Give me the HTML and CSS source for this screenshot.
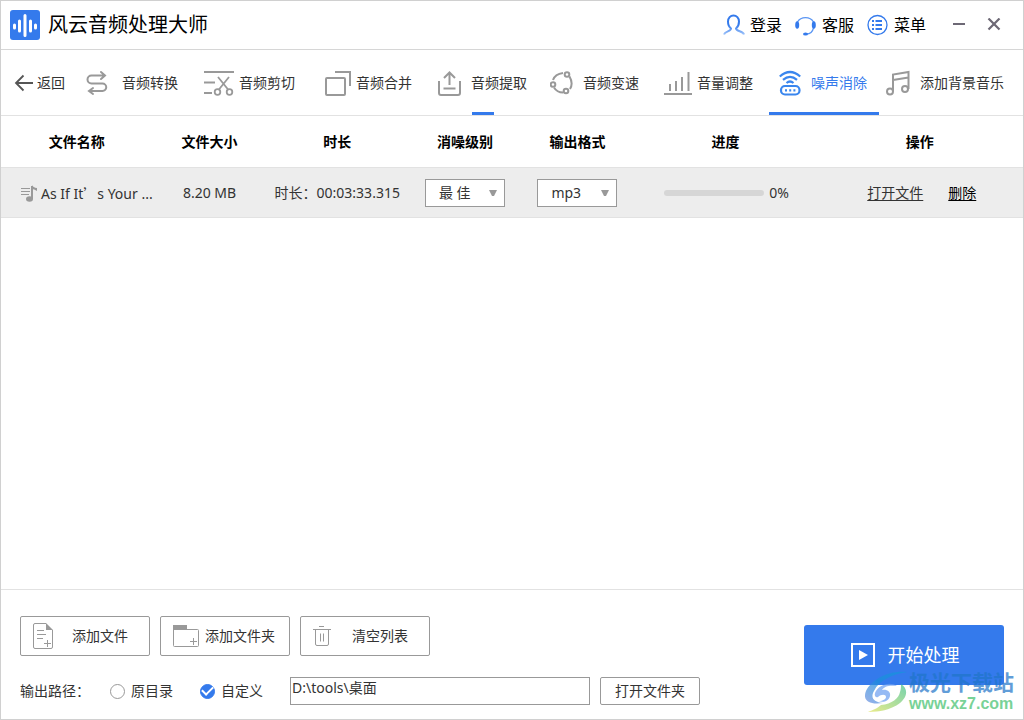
FILE: index.html
```html
<!DOCTYPE html>
<html lang="zh-CN">
<head>
<meta charset="utf-8">
<title>风云音频处理大师</title>
<link rel="stylesheet" href="styles.css">
</head>
<body>
<div class="window">
  <header class="titlebar">
    <svg class="logo" width="30" height="30" viewBox="0 0 30 30"><rect width="30" height="30" rx="3" fill="#347aec"/><path d="M4.500 15v3M9.500 11v10M15 5.500v20M20.500 11v10M25.500 15v3" stroke="#fff" stroke-width="3" stroke-linecap="round"/></svg>
    <h1 class="title">风云音频处理大师</h1>
    <div class="account">
      <button class="link-btn"><svg width="22" height="22" viewBox="0 0 22 22" fill="none" stroke-width="2"><defs><linearGradient id="fade" x1="0" y1="0" x2="0" y2="1"><stop offset=".5" stop-color="#347aec"/><stop offset="1" stop-color="#9ec3fa"/></linearGradient></defs><path d="M1 20.500c1-3.500 7-3 7-6C6 13 5 10 5 7.500 5 4 7.500 1.500 10.500 1.500S16 4 16 7.500c0 2.500-1 5.500-3 7 0 3 7 2.500 8 6" stroke="url(#fade)"/></svg>登录</button>
      <button class="link-btn"><svg width="22" height="22" viewBox="0 0 22 22" fill="none"><path d="M2.500 8a9 8 0 0 1 16 0M18.500 14c-1 4-4 6-7 6" stroke="#5b96f3" stroke-width="1.300"/><ellipse cx="2.200" cy="11" rx="2" ry="3.800" fill="#347aec"/><ellipse cx="18.800" cy="11" rx="2" ry="3.800" fill="#347aec"/><ellipse cx="10.500" cy="20" rx="2.500" ry="1.500" fill="#347aec"/></svg>客服</button>
      <button class="link-btn"><svg width="22" height="22" viewBox="0 0 22 22" fill="none" stroke="#347aec"><circle cx="10.500" cy="11" r="9.500" stroke-width="1.300"/><path d="M5 7h2M8.500 7H15M5 11h2M8.500 11H15M5 15h2M8.500 15H15" stroke-width="2"/></svg>菜单</button>
    </div>
    <button class="win-btn" aria-label="最小化"><svg width="14" height="14" viewBox="0 0 14 14"><path d="M1 6h12" stroke="#6d6875" stroke-width="2"/></svg></button>
    <button class="win-btn" aria-label="关闭"><svg width="14" height="14" viewBox="0 0 14 14"><path d="M1.500 .5l11 11M12.500 .5l-11 11" stroke="#6d6875" stroke-width="2.200"/></svg></button>
  </header>

  <nav class="tabs">
    <button class="tab back"><svg width="19" height="18" viewBox="0 0 19 18" fill="none" stroke="#555" stroke-width="1.800"><path d="M19 9H2M9.500 1.500L2 9l7.500 7.500"/></svg>返回</button>
    <button class="tab wide"><svg width="22" height="26" viewBox="0 0 22 26" fill="none" stroke="#999" stroke-width="2" stroke-linecap="round"><path d="M15 2l4 3.500-4 3.500M18 5.500H5.500a4 4 0 0 0 0 8h11a3.500 3.500 0 0 1 0 7.500H4M7 18l-4 3 4 3"/></svg>音频转换</button>
    <button class="tab tight"><svg width="30" height="26" viewBox="0 0 30 26" fill="none" stroke="#999" stroke-width="1.800"><path d="M0 2h30M0 12.500h11M0 23h8M14 7l10.500 13M25 7L14.500 20"/><circle cx="13.500" cy="22" r="2.800"/><circle cx="25.500" cy="22" r="2.800"/></svg>音频剪切</button>
    <button class="tab tight"><svg width="26" height="26" viewBox="0 0 26 26" fill="none" stroke="#999" stroke-width="2"><rect x="1" y="8" width="19" height="17" rx="1"/><path d="M10 2h15v14"/></svg>音频合并</button>
    <button class="tab marked"><svg width="23" height="26" viewBox="0 0 23 26" fill="none" stroke="#999" stroke-width="2"><path d="M1 11v12q0 2 2 2h17q2 0 2-2V11M5.500 18.500h12M11.500 15V3M6 8l5.500-5.500L17 8"/></svg>音频提取</button>
    <button class="tab"><svg width="23" height="24" viewBox="0 0 23 24" fill="none" stroke="#999" stroke-width="2"><path d="M3 9q2-6 10-7M19.500 5.500q4 7 .5 12.500M13 21.500q-6 0-9-5"/><circle cx="17" cy="3.500" r="2.300"/><circle cx="3" cy="13.500" r="2.300"/><circle cx="16" cy="20" r="2.300"/></svg>音频变速</button>
    <button class="tab tight"><svg width="28" height="26" viewBox="0 0 28 26" fill="none" stroke="#999" stroke-width="2"><path d="M0 24h28M6 21v-7M12 21V11M18 21V7M24.500 21V2"/></svg>音量调整</button>
    <button class="tab active" aria-current="page"><svg width="22" height="26" viewBox="0 0 22 26" fill="none" stroke="#3a86ee" stroke-width="2.200"><path d="M.8 6.500q10.200-9 20.400 0M4 9.800q7-6 14 0M7.500 13q3.500-3 7 0"/><rect x="2" y="16" width="18.500" height="8.500" rx="4"/><path d="M6 20.300h2M10.200 20.300h2M14.400 20.300h2"/></svg>噪声消除</button>
    <button class="tab last"><svg width="24" height="26" viewBox="0 0 24 26" fill="none" stroke="#999" stroke-width="2"><circle cx="4" cy="21.500" r="3"/><circle cx="19" cy="19" r="3"/><path d="M7 21.500V4.500L22.500 2v17M7 10l15.500-2.500"/></svg>添加背景音乐</button>
  </nav>

  <main class="files">
    <table class="file-table">
      <colgroup><col class="c-name"><col class="c-size"><col class="c-time"><col class="c-opt"><col class="c-opt"><col class="c-progress"><col></colgroup>
      <thead><tr><th>文件名称</th><th>文件大小</th><th>时长</th><th>消噪级别</th><th>输出格式</th><th>进度</th><th>操作</th></tr></thead>
      <tbody><tr>
        <td><div class="name"><svg width="17" height="17" viewBox="0 0 17 17" fill="none" stroke="#999"><path d="M0 3.500h9M0 6.500h9M0 9.500h8"/><ellipse cx="8.500" cy="14" rx="3.500" ry="2.800" fill="#999" stroke="none"/><path d="M11 14V1" stroke-width="2"/><path d="M11 0q1 2.500 5 3v3q-3-2-5-2z" fill="#999" stroke="none"/></svg><span>As If It<span class="cjk">’</span>s Your ...</span></div></td>
        <td>8.20 MB</td>
        <td>时长：00:03:33.315</td>
        <td><div class="pick"><select aria-label="消噪级别"><option>最 佳</option></select><svg width="8" height="6" viewBox="0 0 8 6"><path d="M0 0h8L5 6H3z" fill="#999"/></svg></div></td>
        <td><div class="pick"><select aria-label="输出格式"><option>mp3</option></select><svg width="8" height="6" viewBox="0 0 8 6"><path d="M0 0h8L5 6H3z" fill="#999"/></svg></div></td>
        <td><div class="progress"><span class="track"></span>0%</div></td>
        <td><div class="actions"><a href="#">打开文件</a><a class="remove" href="#">删除</a></div></td>
      </tr></tbody>
    </table>
  </main>

  <footer class="footer">
    <div class="controls">
      <div class="row">
        <button class="box-btn file"><svg width="20" height="26" viewBox="0 0 20 26" fill="none" stroke="#999"><path d="M13 .5H2Q.5.500.5 2v22q0 1.500 1.500 1.500h16q1.500 0 1.500-1.500V7M4 7.500h7M4 11.500h9M4 15.500h6M11 20.500h7M14.500 17v7"/><path d="M13 0l7 7h-7z" fill="#999" stroke="none"/></svg>添加文件</button>
        <button class="box-btn folder"><svg width="26" height="22" viewBox="0 0 26 22" fill="none" stroke="#999"><path d="M0 0h14v5H0z" fill="#999" stroke="none"/><path d="M.5 4.500h24q1 0 1 1v15q0 1-1 1h-23q-1 0-1-1zM17 16.500h7M20.500 13v7"/></svg>添加文件夹</button>
        <button class="box-btn clear"><svg width="18" height="20" viewBox="0 0 18 20" fill="none" stroke="#999"><path d="M6 .5h5M0 3.500h18M2.500 3.500V18q0 1.500 1.500 1.500h10q1.500 0 1.500-1.500V3.500M7.500 7.500v8M10.500 7.500v8"/></svg>清空列表</button>
      </div>
      <div class="row output">
        <label class="path-label" for="path">输出路径：</label>
        <label class="radio"><input type="radio" name="dir">原目录</label>
        <label class="radio"><input type="radio" name="dir" checked>自定义</label>
        <input class="path" id="path" type="text" value="D:\tools\桌面">
        <button class="box-btn open">打开文件夹</button>
      </div>
    </div>
    <button class="start"><svg width="24" height="24" viewBox="0 0 24 24"><rect x="1" y="1" width="22" height="22" fill="none" stroke="#fff" stroke-width="2"/><path d="M8 7l9 5-9 5z" fill="#fff"/></svg>开始处理</button>
  </footer>

  <div class="watermark">
    <svg width="42" height="42" viewBox="0 0 42 42"><defs><linearGradient id="wave" x1="0" y1="1" x2="1" y2="0"><stop offset="0" stop-color="#6f8fe0"/><stop offset=".5" stop-color="#1b8fdc"/><stop offset="1" stop-color="#1596dc"/></linearGradient><linearGradient id="leaf" x1="0" y1="1" x2="1" y2="0"><stop offset="0" stop-color="#e2e45a"/><stop offset="1" stop-color="#3cc08c"/></linearGradient></defs><path d="M42 1C24-1 7 8 1 20c-4 10 4 14 17 12-9-1-13-5-9-12C14 9 28 3 42 1z" fill="url(#wave)"/><path d="M10 22c3-8 15-12 22-7-7-1-13 0-15 4 5-1 9 2 8 6-1 5-7 7-11 5 4 0 7-2 7-4 0-3-5-3-8 0-2 1-4-1-3-4z" fill="#6a9df0"/><path d="M36 13c13 8 1 28-33 28 4-2 9-3 13-7 11-1 18-7 19-13 1-3 1-5 1-8z" fill="url(#leaf)"/></svg>
    <div class="mark-text"><span class="mark-name">极光下载站</span><span class="mark-url">www.xz7.com</span></div>
  </div>
</div>
</body>
</html>
```
FILE: styles.css
```css
* { box-sizing: border-box; }
body { margin: 0; }
body, button, input, select {
  font-family: "Noto Sans", "Noto Sans CJK SC", sans-serif;
  font-size: 14px;
  line-height: 20px;
  color: #333;
}
button { border: 0; padding: 0; background: none; white-space: nowrap; cursor: pointer; }
svg { display: block; flex: none; }

.window {
  position: relative;
  display: flex;
  flex-direction: column;
  min-height: 100vh;
  border: 1px solid #d0d0d0;
  background: #fff;
}

.titlebar {
  display: flex;
  align-items: center;
  height: 49px;
  padding: 0 22px 0 9px;
  border-bottom: 1px solid #d6d6d6;
}
.title { margin: 0 auto 0 8px; font-size: 20px; line-height: 28px; font-weight: 400; color: #000; }
.account { display: flex; gap: 13px; margin-right: 26px; }
.link-btn { display: flex; align-items: center; gap: 5px; font-size: 16px; line-height: 24px; color: #000; }
.win-btn { margin-left: 21px; }
.account + .win-btn { margin-left: 0; }

.tabs {
  display: grid;
  grid-template-columns: 85fr 118fr 121fr 113fr 112fr 114fr 105fr 110fr 144fr;
  height: 66px;
  border-bottom: 1px solid #e2e2e2;
}
.tab { position: relative; display: flex; align-items: center; gap: 10px; }
.back { gap: 4px; padding-left: 13px; }
.wide { gap: 14px; }
.tight { gap: 5px; }
.active { padding-left: 10px; border-bottom: 3px solid #347aec; padding-top: 3px; color: #347aec; }
.last { padding-left: 7px; }
.marked::after {
  content: "";
  position: absolute;
  left: 34px;
  bottom: 0;
  width: 22px;
  height: 3px;
  background: #347aec;
}

.files { flex: 1; }
.file-table { width: 100%; table-layout: fixed; border-collapse: collapse; text-align: center; }
.c-name { width: 15%; }
.c-size { width: 11%; }
.c-time { width: 14%; }
.c-opt { width: 11%; }
.c-progress { width: 18%; }
th, td { padding: 2px 2px 0 0; white-space: nowrap; }
th { height: 51px; color: #000; }
td { height: 50px; background: #ededed; border-top: 1px solid #e2e2e2; border-bottom: 1px solid #e2e2e2; }
.name { display: flex; align-items: center; gap: 3px; padding-left: 20px; }
.cjk { font-family: "Noto Sans CJK SC", sans-serif; }
.pick { position: relative; width: 80px; margin: 0 auto; }
.pick select {
  display: block;
  width: 80px;
  height: 28px;
  padding: 0 13px;
  border: 1px solid #999;
  border-radius: 0;
  background: #fff;
  appearance: none;
}
.pick svg { position: absolute; right: 8px; top: 11px; pointer-events: none; }
.progress { display: flex; align-items: center; justify-content: center; gap: 5px; padding-left: 2px; }
.track { width: 100px; height: 6px; border-radius: 3px; background: #d6d6d6; }
.actions { display: flex; justify-content: center; gap: 25px; padding-left: 4px; }
.actions a { color: #333; text-underline-offset: 2px; }
.actions .remove { color: #000; }

.footer {
  display: flex;
  justify-content: space-between;
  align-items: center;
  height: 130px;
  padding: 12px 19px 0;
  border-top: 1px solid #e2e2e2;
}
.controls { display: grid; gap: 21px; }
.row { display: flex; align-items: center; gap: 10px; }
.box-btn {
  display: flex;
  align-items: center;
  width: 130px;
  height: 40px;
  padding-left: 12px;
  border: 1px solid #999;
  border-radius: 2px;
  background: #fff;
}
.file { gap: 19px; }
.folder { gap: 6px; }
.clear { gap: 21px; }
.open { justify-content: center; width: 100px; height: 28px; padding: 0; }
.output { gap: 0; }
.path-label { width: 90px; }
.radio { display: flex; align-items: center; gap: 6px; width: 90px; }
.radio input {
  appearance: none;
  display: grid;
  place-items: center;
  width: 15px;
  height: 15px;
  margin: 0;
  border: 1px solid #999;
  border-radius: 50%;
  background: #fff;
}
.radio input:checked { border-color: #347aec; background: #347aec; }
.radio input:checked::after {
  content: "";
  width: 9px;
  height: 5px;
  margin-bottom: 3px;
  border: solid #fff;
  border-width: 0 0 2px 2px;
  transform: rotate(-45deg);
}
.path { width: 300px; height: 28px; margin-right: 10px; padding: 0 1px 8px; border: 1px solid #999; }

.start {
  display: flex;
  align-items: center;
  justify-content: center;
  gap: 13px;
  width: 200px;
  height: 60px;
  margin-bottom: 12px;
  padding-left: 2px;
  border-radius: 3px;
  background: #347aec;
  font-size: 18px;
  color: #fff;
}

.watermark {
  position: absolute;
  right: 9px;
  bottom: 5px;
  display: flex;
  align-items: center;
  gap: 2px;
  opacity: 0.7;
  pointer-events: none;
}
.mark-text { display: grid; font-weight: 700; }
.mark-name { font-size: 21px; line-height: 24px; color: #1f75c8; }
.mark-url { font-family: "Liberation Sans", sans-serif; font-size: 16px; line-height: 20px; color: #3fbf6c; }
```
